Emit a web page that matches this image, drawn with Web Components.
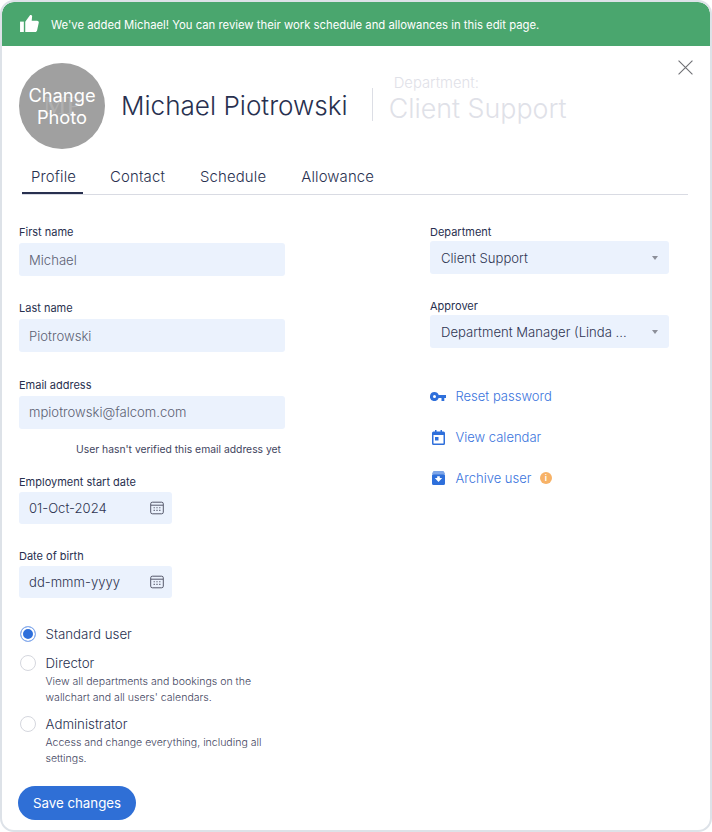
<!DOCTYPE html>
<html>
<head>
<meta charset="utf-8">
<style>
  html, body { margin: 0; padding: 0; background: #fff; }
  body { width: 712px; height: 832px; overflow: hidden; font-family: Inter, "Noto Sans", sans-serif; color: #28304f; }
  .cols { display: flex; }
  .left { width: 428px; padding-left: 17px; box-sizing: border-box; }
  .left form-field { width: 266px; }
  .right { width: 239px; }
</style>
</head>
<body>
<template id="fieldTpl">
  <style>
    :host { display: block; }
    label { display: block; font-size: 11px; line-height: 14px; color: #28304f; margin: 1px 0 4px; }
    .box { display: flex; align-items: center; justify-content: space-between; height: 33px; background: #ebf2fd; border-radius: 3px; padding: 0 10px; font-size: 13.100px; font-weight: 300; color: #5c6173; box-sizing: border-box; }
    :host([type=date]) label { margin-bottom: 3px; }
    :host([type=date]) .box { width: 153px; height: 32px; padding-right: 8px; color: #2f3552; font-weight: 350; }
    :host([type=select]) label { margin-bottom: 2px; }
    :host([type=select]) .box { color: #2f3552; padding: 1px 11px 0 11px; font-weight: 350; }
    svg { display: block; }
    .arrow { width: 0; height: 0; border-left: 3px solid transparent; border-right: 3px solid transparent; border-top: 4px solid #8c8f99; }
  </style>
  <label></label>
  <div class="box"><span class="val"></span><span class="ic"></span></div>
  <slot></slot>
</template>

<app-card>
  <app-banner>We've added Michael! You can review their work schedule and allowances in this edit page.</app-banner>
  <profile-header>
    <span slot="name">Michael Piotrowski</span>
    <span slot="dept">Client Support</span>
  </profile-header>
  <tab-bar tabs="Profile,Contact,Schedule,Allowance"></tab-bar>
  <div class="cols" style="margin-top:29px">
    <div class="left">
      <form-field label="First name" value="Michael"></form-field>
      <form-field label="Last name" value="Piotrowski" style="margin-top:25px"></form-field>
      <form-field label="Email address" value="mpiotrowski@falcom.com" style="margin-top:25.500px"></form-field>
      <div style="width:266px;margin-top:13.500px;font-size:10.350px;line-height:14px;text-align:right;padding-right:4px;box-sizing:border-box;color:#3f4560">User hasn't verified this email address yet</div>
      <form-field label="Employment start date" value="01-Oct-2024" type="date" style="margin-top:19px"></form-field>
      <form-field label="Date of birth" value="dd-mmm-yyyy" type="date" style="margin-top:25px"></form-field>
      <role-option label="Standard user" checked style="margin-top:26.500px"></role-option>
      <role-option label="Director" style="margin-top:9.500px">View all departments and bookings on the<br>wallchart and all users' calendars.</role-option>
      <role-option label="Administrator" style="margin-top:8.500px">Access and change everything, including all<br>settings.</role-option>
      <save-button style="margin-top:19px;margin-left:-1px">Save changes</save-button>
    </div>
    <div class="right">
      <form-field label="Department" value="Client Support" type="select"></form-field>
      <form-field label="Approver" value="Department Manager (Linda ..." type="select" style="margin-top:25px"></form-field>
      <side-link style="margin-top:39px">
        <svg slot="icon" width="16" height="9" viewBox="0 0 16 9" fill="#2e6fdb"><path fill-rule="evenodd" d="M4.500 0a4.500 4.500 0 0 1 4.200 3H16v3h-1.700v3h-2.800V6H8.700a4.500 4.500 0 1 1-4.200-6zm0 3a1.500 1.500 0 1 0 0 3 1.500 1.500 0 0 0 0-3z"/></svg>
        Reset password
      </side-link>
      <side-link style="margin-top:23px">
        <svg slot="icon" width="13" height="15" viewBox="0 0 13 15" fill="#2e6fdb"><path fill-rule="evenodd" d="M3 0h1.500v1.500h4V0H10v1.500h1.500A1.500 1.500 0 0 1 13 3v10.500a1.500 1.500 0 0 1-1.500 1.500h-10A1.500 1.500 0 0 1 0 13.500V3a1.500 1.500 0 0 1 1.500-1.500H3zM1.500 5v8.500h10V5z"/><rect x="3" y="7" width="3.500" height="3.500"/></svg>
        View calendar
      </side-link>
      <side-link style="margin-top:23px">
        <svg slot="icon" width="13" height="14" viewBox="0 0 13 14"><path fill="#2e6fdb" d="M1.500 3h10A1.500 1.500 0 0 1 13 4.500v8a1.500 1.500 0 0 1-1.500 1.500h-10A1.500 1.500 0 0 1 0 12.500v-8A1.500 1.500 0 0 1 1.500 3z"/><path fill="#7ea6e8" d="M1.500 0h10L13 2.500v1H0v-1z"/><path fill="#fff" d="M2.800 7h2.400V5.200h2.600V7h2.400l-3.700 4z"/></svg>
        Archive user
        <span style="display:inline-flex;align-items:center;justify-content:center;width:12px;height:12px;border-radius:50%;background:#f7b267;color:#fff;font-size:8px;font-weight:700;margin-left:8.500px">i</span>
      </side-link>
    </div>
  </div>
</app-card>

<script>
const calIcon = `<svg width="14" height="14" viewBox="0 0 14 14" fill="none" stroke="#55586a" stroke-width="1"><rect x=".7" y="1.200" width="12.600" height="11.600" rx="1.600"/><path d="M1 4.200h12"/><path d="M3.600 6.800h1.200M6.400 6.800h1.200M9.200 6.800h1.200M3.600 9.400h1.200M6.400 9.400h1.200M9.200 9.400h1.200" stroke-width="1.100"/></svg>`;

class FormField extends HTMLElement {
  constructor() {
    super();
    this.attachShadow({ mode: "open" });
    this.shadowRoot.appendChild(document.getElementById("fieldTpl").content.cloneNode(true));
    this.shadowRoot.querySelector("label").textContent = this.getAttribute("label");
    this.shadowRoot.querySelector(".val").textContent = this.getAttribute("value");
    const ic = this.shadowRoot.querySelector(".ic");
    const type = this.getAttribute("type");
    if (type === "date") ic.innerHTML = calIcon;
    if (type === "select") ic.innerHTML = `<div class="arrow"></div>`;
  }
}
customElements.define("form-field", FormField);

class AppBanner extends HTMLElement {
  constructor() {
    super();
    this.attachShadow({ mode: "open" });
    this.shadowRoot.innerHTML = `
      <style>
        :host { display: flex; align-items: center; height: 44px; background: #4aa66e; color: #fff; font-size: 11.300px; padding: 1px 0 0 18px; border-radius: 12px 12px 0 0; box-sizing: border-box; }
        svg { margin: -3px 12px 0 0; display: block; }
      </style>
      <svg width="19" height="17" viewBox="0 0 20 18" fill="#fff"><rect x="0" y="7" width="4" height="11"/><path d="M5.500 7.200 10.300.6c.9-1 2.600-.3 2.500 1.100L12.300 6H18c1.200 0 2.100 1.100 1.800 2.300l-1.800 8c-.2.9-1 1.700-2 1.700H5.500z"/></svg>
      <slot></slot>`;
  }
}
customElements.define("app-banner", AppBanner);

class ProfileHeader extends HTMLElement {
  constructor() {
    super();
    this.attachShadow({ mode: "open" });
    this.shadowRoot.innerHTML = `
      <style>
        :host { display: flex; position: relative; height: 102px; padding: 17px 0 0 17px; box-sizing: border-box; align-items: flex-start; }
        .avatar { position: relative; width: 86px; height: 86px; border-radius: 50%; background: #a0a0a0; color: #fff; display: flex; align-items: center; justify-content: center; text-align: center; font-size: 18.300px; font-weight: 400; line-height: 22px; flex: none; }
        .mono { position: absolute; inset: 0; display: flex; align-items: center; justify-content: center; font: 26px "Liberation Serif", serif; color: #b0b0b0; }
        .txt { position: relative; }
        h1 { font-size: 26.100px; font-weight: 300; margin: 25px 0 0 16px; line-height: 36px; color: #28304f; white-space: nowrap; }
        .sep { width: 1px; height: 33px; background: #dcdee5; margin: 25px 0 0 24px; flex: none; }
        .dept { margin: 11px 0 0 17px; color: #dfe1e8; font-weight: 300; }
        .dept small { display: block; font-size: 14.800px; line-height: 18px; margin-left: 4px; }
        .dept b { display: block; font-weight: 300; font-size: 26.800px; line-height: 32px; white-space: nowrap; margin-left: -1px; }
        .close { position: absolute; top: 14px; right: 17px; }
      </style>
      <div class="avatar"><span class="mono">MP</span><span class="txt">Change<br>Photo</span></div>
      <h1><slot name="name"></slot></h1>
      <div class="sep"></div>
      <div class="dept"><small>Department:</small><b><slot name="dept"></slot></b></div>
      <svg class="close" width="15" height="15" viewBox="0 0 16 16" stroke="#6f7075" stroke-width="1.200" fill="none"><path d="M.6.6l14.800 14.800M15.400.6.600 15.400"/></svg>`;
  }
}
customElements.define("profile-header", ProfileHeader);

class TabBar extends HTMLElement {
  constructor() {
    super();
    this.attachShadow({ mode: "open" });
    const tabs = this.getAttribute("tabs").split(",");
    this.shadowRoot.innerHTML = `
      <style>
        :host { display: flex; margin: 13px 22px 0 20px; height: 33px; border-bottom: 1px solid #d9dbe3; font-size: 14.900px; letter-spacing: .15px; font-weight: 300; color: #28304f; }
        div { height: 31px; line-height: 33px; padding: 0 9px; margin-right: 17px; }
        div.on { border-bottom: 2px solid #28304f; padding-right: 7px; margin-right: 18px; }
      </style>
      ${tabs.map((t, i) => `<div class="${i === 0 ? "on" : ""}">${t}</div>`).join("")}`;
  }
}
customElements.define("tab-bar", TabBar);

class RoleOption extends HTMLElement {
  constructor() {
    super();
    this.attachShadow({ mode: "open" });
    this.shadowRoot.innerHTML = `
      <style>
        :host { display: flex; align-items: flex-start; }
        .dot { width: 14px; height: 14px; border-radius: 50%; border: 1px solid #d5d7de; margin: 1px 9.500px 0 1px; flex: none; background: #fff; }
        :host([checked]) .dot { border-color: #8db0ee; background: #2e6fdb; box-shadow: inset 0 0 0 2px #fff; }
        .t { font-size: 13.300px; line-height: 18px; color: #28304f; font-weight: 350; }
        .d { font-size: 10.550px; line-height: 16px; color: #3f4560; margin-top: 2px; font-weight: 350; }
      </style>
      <span class="dot"></span>
      <div><div class="t">${this.getAttribute("label")}</div><div class="d"><slot></slot></div></div>`;
  }
}
customElements.define("role-option", RoleOption);

class SideLink extends HTMLElement {
  constructor() {
    super();
    this.attachShadow({ mode: "open" });
    this.shadowRoot.innerHTML = `
      <style>
        :host { display: flex; align-items: center; height: 18px; color: #3a74dd; font-size: 13px; font-weight: 350; }
        .i { width: 16px; height: 16px; margin-right: 9.500px; flex: none; display: flex; align-items: center; justify-content: center; }
      </style>
      <span class="i"><slot name="icon"></slot></span><slot></slot>`;
  }
}
customElements.define("side-link", SideLink);

class SaveButton extends HTMLElement {
  constructor() {
    super();
    this.attachShadow({ mode: "open" });
    this.shadowRoot.innerHTML = `
      <style>
        :host { display: inline-flex; align-items: center; justify-content: center; width: 118px; height: 34px; border-radius: 17px; background: #2f6fd6; color: #fff; font-size: 13.300px; }
      </style><slot></slot>`;
  }
}
customElements.define("save-button", SaveButton);

class AppCard extends HTMLElement {
  constructor() {
    super();
    this.attachShadow({ mode: "open" });
    this.shadowRoot.innerHTML = `
      <style>
        :host { display: block; width: 712px; height: 832px; border: 2px solid #dde2e8; border-radius: 14px; box-sizing: border-box; background: #fff; overflow: hidden; }
      </style><slot></slot>`;
  }
}
customElements.define("app-card", AppCard);
</script>
</body>
</html>
